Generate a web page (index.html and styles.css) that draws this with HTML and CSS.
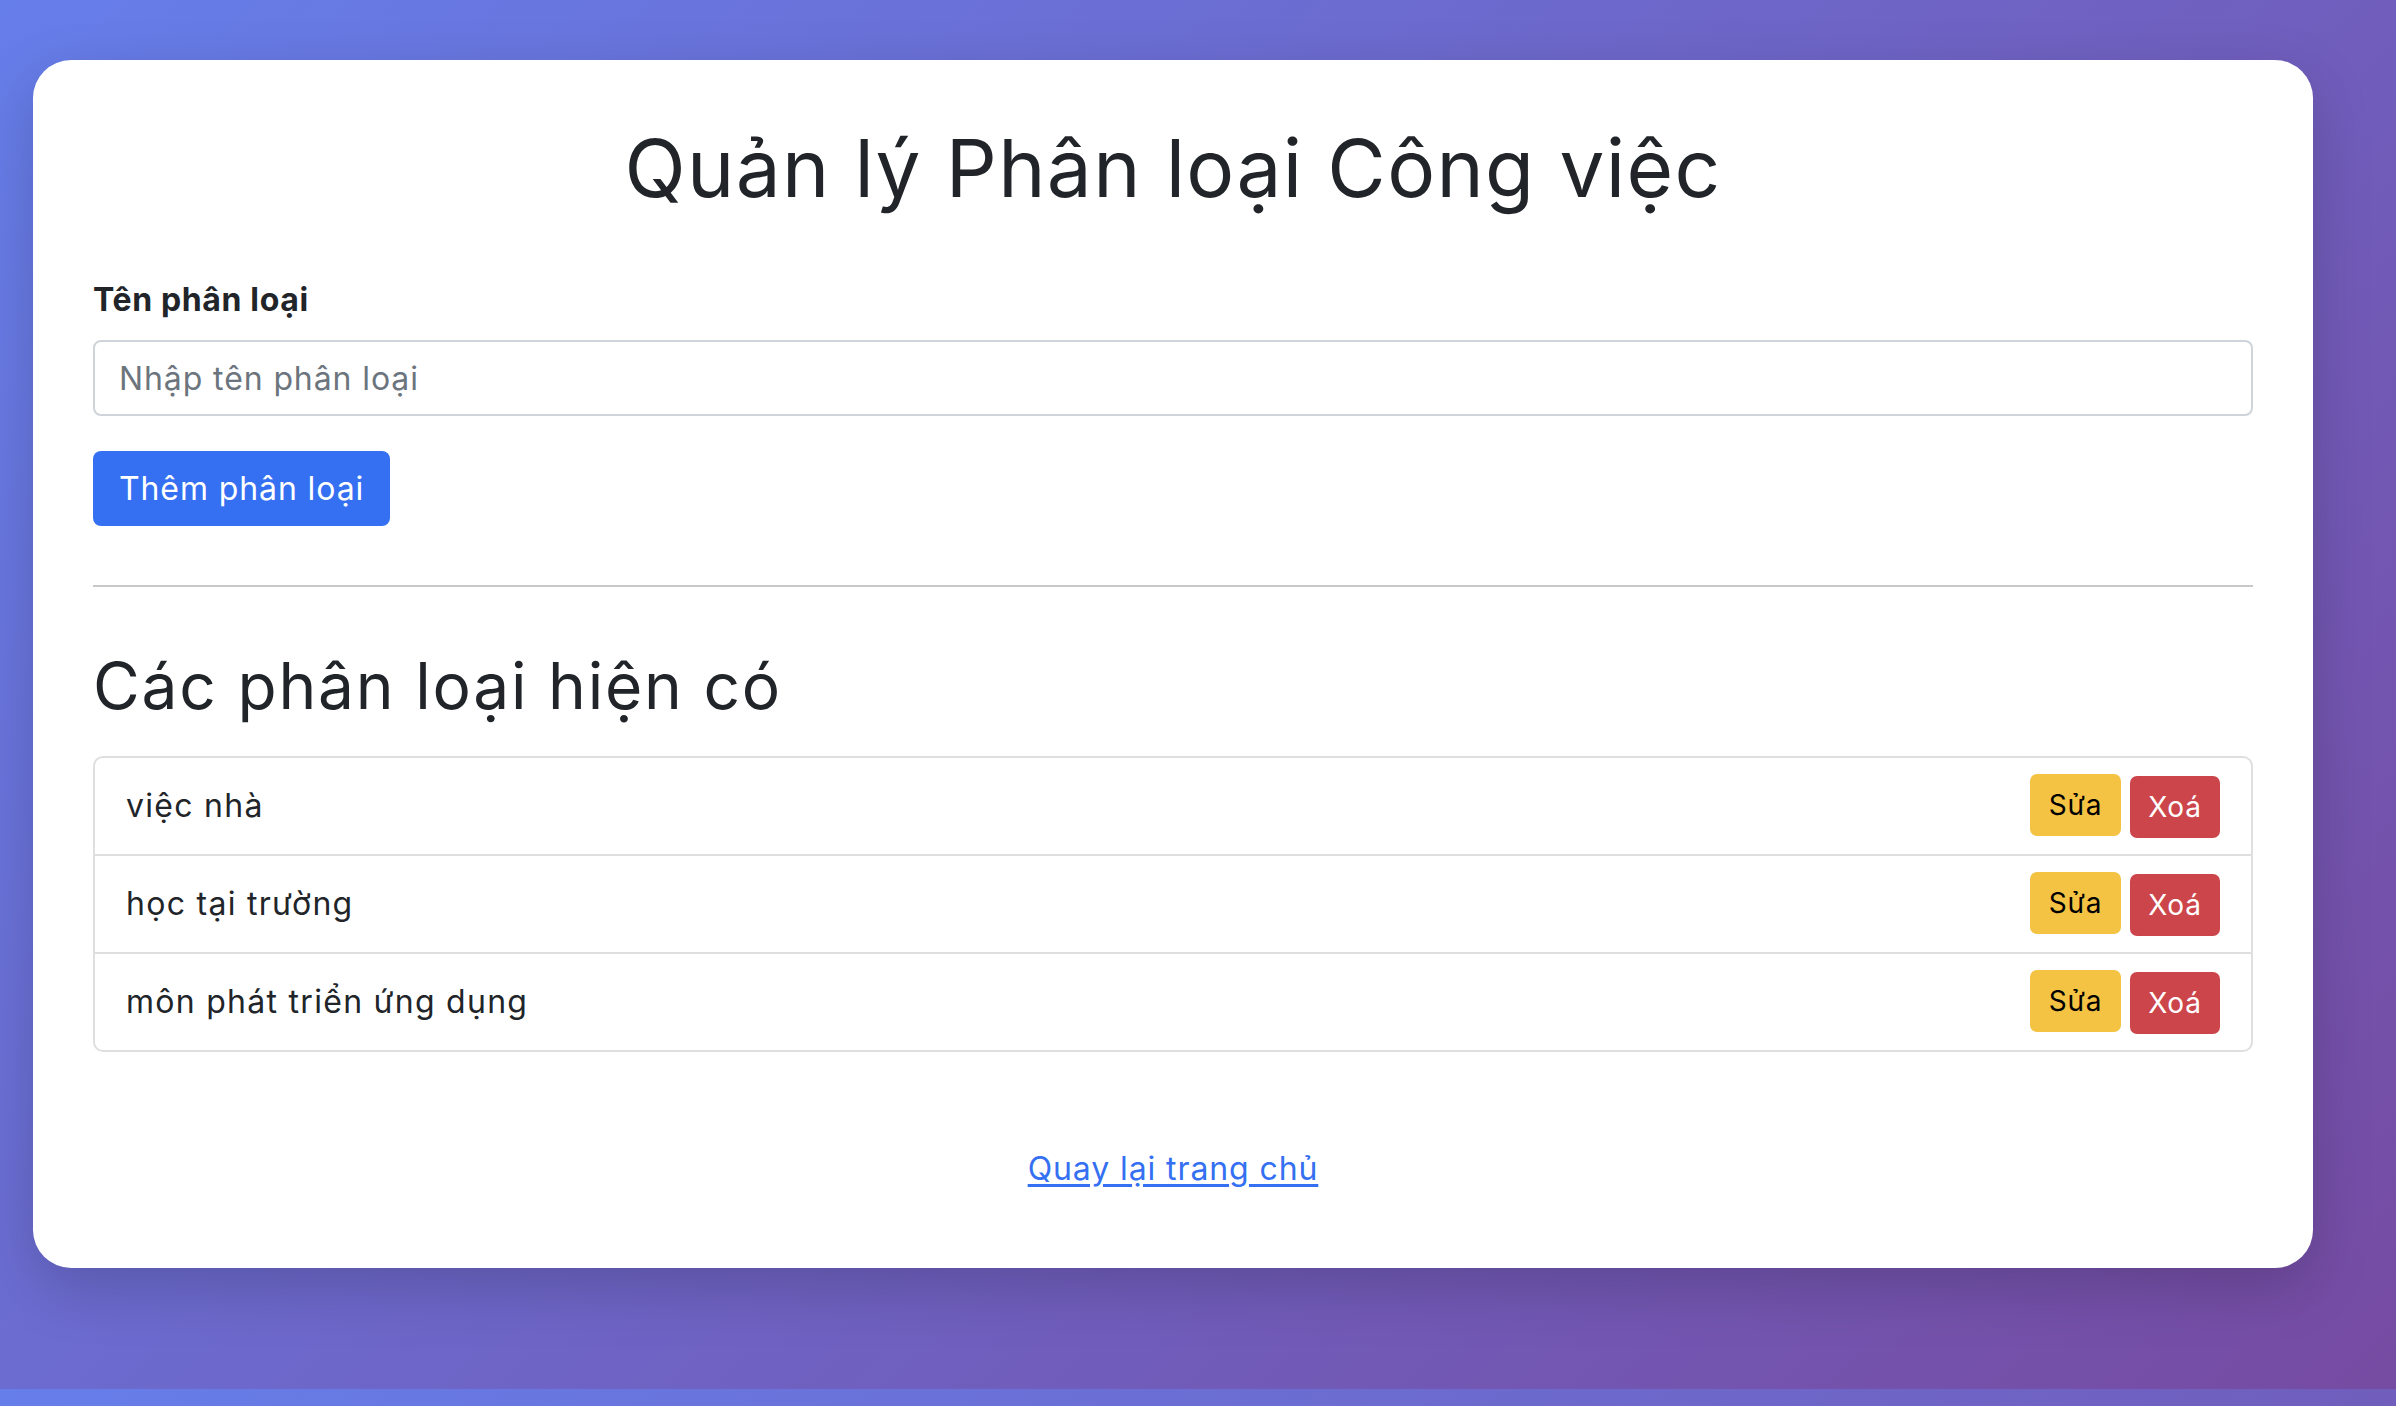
FILE: index.html
```html
<!DOCTYPE html>
<html lang="vi">
<head>
<meta charset="utf-8">
<title>Quản lý Phân loại Công việc</title>
<link rel="stylesheet" href="styles.css">
</head>
<body>
<main class="card">
  <h1 class="title">Quản lý Phân loại Công việc</h1>
  <form class="add-form">
    <label class="form-label" for="ten">Tên phân loại</label>
    <input class="form-input" id="ten" type="text" placeholder="Nhập tên phân loại">
    <button class="btn btn-primary" type="button">Thêm phân loại</button>
  </form>
  <hr class="divider">
  <h2 class="subtitle">Các phân loại hiện có</h2>
  <ul class="list">
    <li class="list-item"><span class="item-name">việc nhà</span><span class="actions"><button class="btn-sm btn-warning" type="button">Sửa</button><button class="btn-sm btn-danger" type="button">Xoá</button></span></li>
    <li class="list-item"><span class="item-name">học tại trường</span><span class="actions"><button class="btn-sm btn-warning" type="button">Sửa</button><button class="btn-sm btn-danger" type="button">Xoá</button></span></li>
    <li class="list-item"><span class="item-name">môn phát triển ứng dụng</span><span class="actions"><button class="btn-sm btn-warning" type="button">Sửa</button><button class="btn-sm btn-danger" type="button">Xoá</button></span></li>
  </ul>
  <p class="back"><a class="back-link" href="#">Quay lại trang chủ</a></p>
</main>
</body>
</html>
```
FILE: styles.css
```css
* { box-sizing: border-box; }
html { background: linear-gradient(135deg, #667eea 0%, #764ba2 100%); }
body {
  margin: 0;
  padding: 60px 0 121px;
  font-family: Inter, "Noto Sans", sans-serif;
  color: #212529;
  font-size: 32px;
  line-height: 1.5;
  letter-spacing: 0.028em;
}
.card {
  display: flex;
  flex-direction: column;
  width: 2280px;
  margin-left: 33px;
  padding: 60px 60px;
  background: #fff;
  border-radius: 38px;
  box-shadow: 0 20px 60px rgba(0, 0, 0, 0.18);
}
.title {
  margin: 0 0 60px;
  text-align: center;
  font-size: 80px;
  font-weight: 400;
  line-height: 1.2;
  letter-spacing: 0.017em;
}
.add-form { display: flex; flex-direction: column; align-items: flex-start; }
.form-label { font-weight: 700; margin-bottom: 16px; letter-spacing: 0.02em; }
.form-input {
  width: 100%;
  height: 76px;
  padding: 12px 24px;
  font: inherit;
  letter-spacing: inherit;
  color: #212529;
  border: 2px solid #ced4da;
  border-radius: 8px;
  margin-bottom: 35px;
}
.form-input::placeholder { color: #6c757d; }
.btn {
  font: inherit;
  letter-spacing: inherit;
  height: 75px;
  padding: 12px 24px;
  border: 2px solid transparent;
  border-radius: 8px;
}
.btn-primary { background: #3470f1; color: #fff; }
.divider {
  width: 100%;
  margin: 59px 0 61px;
  border: 0;
  border-top: 2px solid #c8c8c8;
}
.subtitle {
  margin: 0 0 31px;
  font-size: 64px;
  font-weight: 400;
  line-height: 1.2;
  letter-spacing: 0.028em;
}
.list {
  list-style: none;
  margin: 0;
  padding: 0;
  border: 2px solid #dfdfdf;
  border-radius: 10px;
}
.list-item {
  display: flex;
  align-items: center;
  justify-content: space-between;
  padding: 16px 31px;
  min-height: 96px;
}
.list-item + .list-item { border-top: 2px solid #dfdfdf; }
.item-name { letter-spacing: 0.04em; }
.actions { display: flex; align-items: flex-start; gap: 9px; height: 64px; }
.btn-sm {
  font: inherit;
  font-size: 28px;
  line-height: 42px;
  letter-spacing: 0.03em;
  height: 62px;
  padding: 8px 0;
  border: 0;
  border-radius: 7px;
  text-align: center;
}
.btn-warning { background: #f4c344; color: #000; width: 91px; }
.btn-danger { background: #cc454b; color: #fff; width: 90px; margin-top: 2px; }
.back { margin: 93px 0 15px; text-align: center; }
.back-link { color: #3470f1; text-decoration: underline; text-underline-offset: 4px; }
```
